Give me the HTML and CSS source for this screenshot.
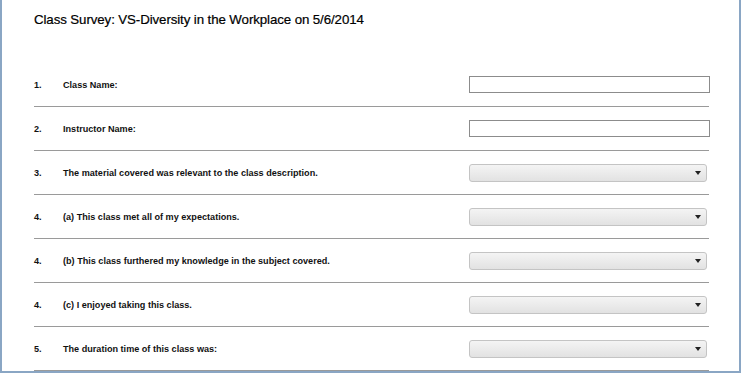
FILE: index.html
```html
<!DOCTYPE html>
<html lang="en">
<head>
    <meta charset="UTF-8">
    <title>Class Survey</title>
    <link rel="stylesheet" href="styles.css">
</head>
<body>
    <div class="frame">
        <h1 class="title">Class Survey: VS-Diversity in the Workplace on 5/6/2014</h1>
        <div class="survey">
            <div class="row">
                <span class="num">1.</span>
                <span class="label">Class Name:</span>
                <input class="text-box" type="text">
            </div>
            <div class="row">
                <span class="num">2.</span>
                <span class="label">Instructor Name:</span>
                <input class="text-box" type="text">
            </div>
            <div class="row">
                <span class="num">3.</span>
                <span class="label">The material covered was relevant to the class description.</span>
                <div class="drop"><span class="arrow"></span></div>
            </div>
            <div class="row">
                <span class="num">4.</span>
                <span class="label">(a) This class met all of my expectations.</span>
                <div class="drop"><span class="arrow"></span></div>
            </div>
            <div class="row">
                <span class="num">4.</span>
                <span class="label">(b) This class furthered my knowledge in the subject covered.</span>
                <div class="drop"><span class="arrow"></span></div>
            </div>
            <div class="row">
                <span class="num">4.</span>
                <span class="label">(c) I enjoyed taking this class.</span>
                <div class="drop"><span class="arrow"></span></div>
            </div>
            <div class="row">
                <span class="num">5.</span>
                <span class="label">The duration time of this class was:</span>
                <div class="drop"><span class="arrow"></span></div>
            </div>
        </div>
    </div>
</body>
</html>
```

FILE: styles.css
```css
body, html {
    margin: 0;
    padding: 0;
    background: #fff;
    font-family: "Liberation Sans", Arial, sans-serif;
    color: #111;
}

.frame {
    width: 737px;
    height: 371px;
    border-left: 2px solid #8aa6c4;
    border-right: 2px solid #8aa6c4;
    border-bottom: 2px solid #8aa6c4;
    overflow: hidden;
}

.title {
    margin: 0;
    padding: 12px 0 0 32px;
    height: 63px;
    box-sizing: border-box;
    font-size: 13.3px;
    font-weight: normal;
    letter-spacing: -0.1px;
    color: #000;
    -webkit-text-stroke: 0.2px #000;
}

.survey {
    width: 675px;
    margin-left: 32px;
}

.row {
    display: flex;
    align-items: center;
    height: 43px;
    border-bottom: 1px solid #9a9a9a;
    font-size: 9.1px;
    font-weight: bold;
}

.num {
    width: 29px;
}

.label {
    flex: 1;
}

.text-box {
    width: 241px;
    height: 17px;
    margin: 0 -1px 0 0;
    padding: 0;
    box-sizing: border-box;
    border: 1px solid #8c8c8c;
    background: #fff;
}

.drop {
    width: 238px;
    height: 18px;
    margin-right: 2px;
    box-sizing: border-box;
    border: 1px solid #c4c4c4;
    border-radius: 3px;
    background: linear-gradient(#f4f4f4, #e2e2e2);
    display: flex;
    align-items: center;
    justify-content: flex-end;
    padding-right: 5px;
}

.arrow {
    width: 0;
    height: 0;
    border-left: 3px solid transparent;
    border-right: 3px solid transparent;
    border-top: 4px solid #222;
}
```
